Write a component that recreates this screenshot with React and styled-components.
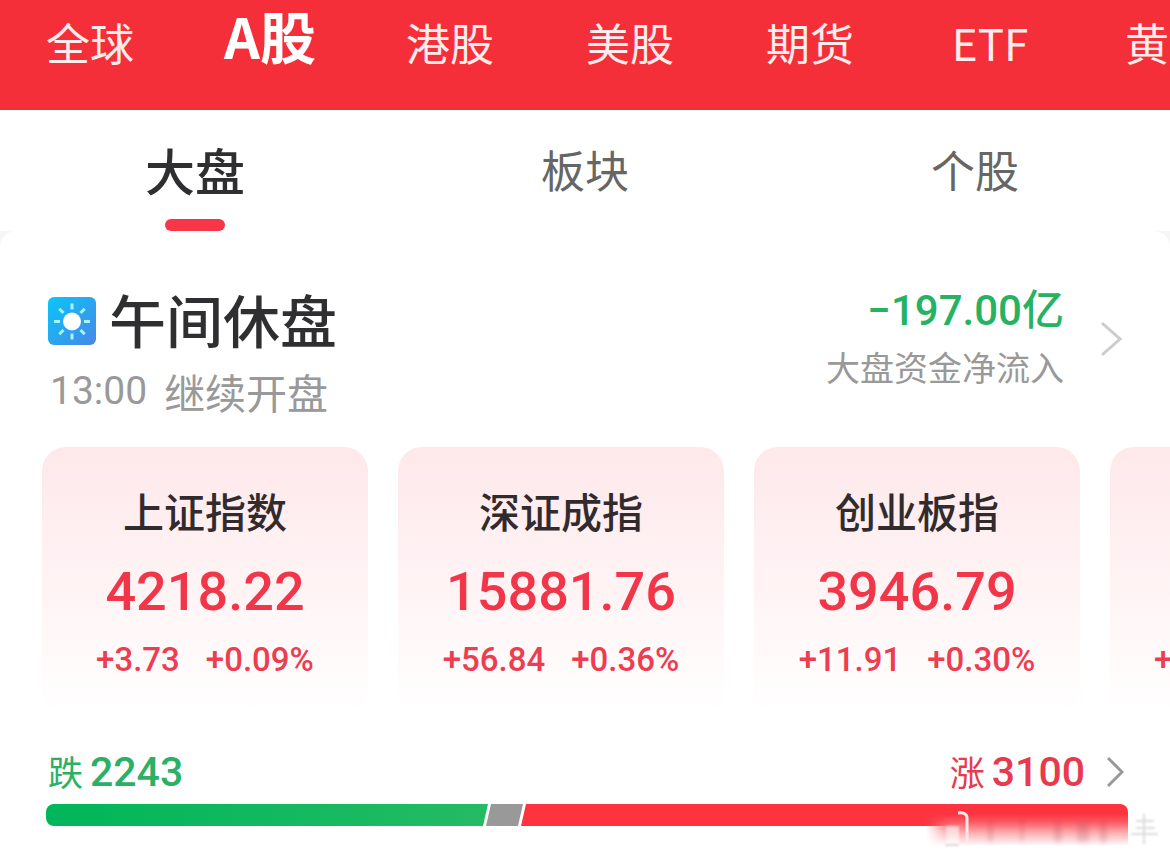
import React, { useState } from "react";
import styled, { createGlobalStyle } from "styled-components";

const GlobalStyle = createGlobalStyle`
  * {
    box-sizing: border-box;
  }

  body {
    margin: 0;
    background: #ffffff;
    color: #2f2f31;
    font-family: "Noto Sans CJK SC", sans-serif;
    overflow-x: hidden;
  }

  button {
    border: 0;
    padding: 0;
    background: none;
    font-family: inherit;
    cursor: pointer;
  }
`;

const Page = styled.div`
  min-height: 100vh;
  overflow: hidden;
`;

// Red market bar at the top
const MarketBar = styled.nav`
  display: flex;
  align-items: flex-start;
  background: #f52f39;
`;

const MarketTab = styled.button`
  flex: 0 0 180px;
  padding: ${(props) => (props.$active ? "5px 0 45px" : "12px 0 38px")};
  color: ${(props) => (props.$active ? "#ffffff" : "#ffeceb")};
  font-size: ${(props) => (props.$active ? "56px" : "44px")};
  font-weight: ${(props) => (props.$active ? 700 : 400)};
  line-height: 60px;
  white-space: nowrap;
`;

// Last tab, cut off by the edge of the screen
const EdgeTab = styled(MarketTab)`
  flex: 0 0 auto;
  padding-left: 45px;
`;

const SubTabs = styled.div`
  display: grid;
  grid-template-columns: repeat(3, 1fr);
  background: #ffffff;
`;

const SubTab = styled.button`
  display: flex;
  flex-direction: column;
  align-items: center;
  gap: 20px;
  padding-top: 29px;
  color: ${(props) => (props.$active ? "#2f2f31" : "#666666")};
  font-size: ${(props) => (props.$active ? "50px" : "44px")};
  font-weight: ${(props) => (props.$active ? 500 : 400)};
  line-height: 60px;

  &::after {
    content: "";
    width: 60px;
    height: 12px;
    border-radius: 6px;
    background: ${(props) => (props.$active ? "#f93648" : "transparent")};
  }
`;

// Grey shows behind the rounded top corners of the panel
const PanelBack = styled.div`
  background: #f6f6f6;
`;

const Panel = styled.main`
  padding: 60px 42px 32px;
  border-radius: 16px 16px 0 0;
  background: #ffffff;
`;

const StatusRow = styled.section`
  display: flex;
  justify-content: space-between;
  align-items: flex-start;
  padding: 0 6px;
`;

const StatusTitle = styled.h1`
  display: flex;
  align-items: flex-end;
  gap: 13px;
  margin: 0 0 22px;
  font-size: 57px;
  font-weight: 500;
  line-height: 54px;
`;

const StatusNote = styled.p`
  display: flex;
  align-items: center;
  gap: 17px;
  margin: 0;
  color: #999999;
  font-size: 41px;
  line-height: 48px;
`;

const NoteTime = styled.time`
  padding-left: 2px;
  font-family: Roboto, sans-serif;
  font-size: 39px;
`;

const FlowButton = styled.button`
  display: flex;
  align-items: center;
  gap: 36px;
  color: #999999;
  text-align: right;
`;

const FlowText = styled.span`
  display: flex;
  flex-direction: column;
  gap: 16px;
  font-size: 34px;
  line-height: 40px;
`;

const FlowValue = styled.span`
  color: #25b262;
  font-family: Roboto, "Noto Sans CJK SC", sans-serif;
  font-size: 42px;
  font-weight: 500;
  line-height: 40px;
`;

const CardRow = styled.section`
  display: flex;
  gap: 30px;
  margin: 32px -42px 0 0;
`;

const Card = styled.article`
  display: flex;
  flex: 0 0 326px;
  flex-direction: column;
  align-items: ${(props) => (props.$cut ? "flex-start" : "center")};
  justify-content: flex-end;
  padding: 39px ${(props) => (props.$cut ? "44px" : "0")} 35px;
  border-radius: 24px;
  background: linear-gradient(#fee8ea, #fff3f4 50%, #ffffff);
`;

const CardName = styled.h2`
  margin: 0 0 26px;
  color: #322b2d;
  font-size: 41px;
  font-weight: 500;
  line-height: 48px;
`;

const CardValue = styled.strong`
  margin-bottom: 16px;
  color: #f2364a;
  font-family: Roboto, sans-serif;
  font-size: 54px;
  font-weight: 500;
  line-height: 64px;
`;

const CardChange = styled.div`
  display: flex;
  gap: 26px;
  color: #ee3c50;
  font-family: Roboto, sans-serif;
  font-size: 33px;
  font-weight: 500;
  line-height: 40px;
`;

const BreadthRow = styled.section`
  display: flex;
  justify-content: space-between;
  margin-top: 32px;
  padding: 0 4px 0 6px;
`;

const Breadth = styled.button`
  display: flex;
  align-items: baseline;
  gap: 7px;
  color: ${(props) => props.$color};
  font-size: 35px;
  line-height: 48px;

  svg {
    align-self: center;
    margin-left: 14px;
  }
`;

const BreadthCount = styled.span`
  font-family: Roboto, sans-serif;
  font-size: 41px;
  font-weight: 500;
`;

const BarWrap = styled.div`
  position: relative;
  margin-top: 8px;
  padding-left: 4px;
`;

const Bar = styled.div`
  display: flex;
  height: 22px;
  border-radius: 8px;
  overflow: hidden;
`;

const Segment = styled.div`
  margin-left: ${(props) => (props.$first ? "0" : "-2px")};
  background: ${(props) => props.$fill};
  clip-path: polygon(
    ${(props) => (props.$first ? "0" : "5px")} 0,
    100% 0,
    ${(props) => (props.$last ? "100%" : "calc(100% - 5px)")} 100%,
    0 100%
  );
`;

// Washed-out patch over the right end of the bar
const Smudge = styled.svg`
  position: absolute;
  top: 6px;
  right: -34px;
`;

const MARKETS = ["全球", "A股", "港股", "美股", "期货", "ETF"];
const SECTIONS = ["大盘", "板块", "个股"];

const INDICES = [
  { name: "上证指数", value: "4218.22", change: "+3.73", percent: "+0.09%" },
  { name: "深证成指", value: "15881.76", change: "+56.84", percent: "+0.36%" },
  { name: "创业板指", value: "3946.79", change: "+11.91", percent: "+0.30%" },
];

const BREADTH = [
  { key: "down", share: 442, fill: "linear-gradient(90deg, #00b65a, #24bb63)" },
  { key: "flat", share: 37, fill: "#999999" },
  { key: "up", share: 607, fill: "#fd3440" },
];

const SunIcon = () => (
  <svg width="48" height="48" viewBox="0 0 48 48" aria-hidden="true">
    <defs>
      <linearGradient id="sky" x1="0" y1="0" x2="1" y2="1">
        <stop offset="0" stopColor="#08c6fa" />
        <stop offset="1" stopColor="#4a86e6" />
      </linearGradient>
    </defs>
    <rect width="48" height="48" rx="6" fill="url(#sky)" />
    <circle cx="24" cy="24.5" r="9" fill="#ffffff" />
    {[0, 45, 90, 135, 180, 225, 270, 315].map((angle) => (
      <rect
        key={angle}
        x="22.5"
        y="6.5"
        width="3"
        height="6"
        fill="#a5f3fd"
        transform={`rotate(${angle} 24 24.5)`}
      />
    ))}
  </svg>
);

const Chevron = ({ width, height, color }) => (
  <svg width={width} height={height} viewBox={`0 0 ${width} ${height}`} aria-hidden="true">
    <polyline
      points={`2,2 ${width - 2},${height / 2} 2,${height - 2}`}
      fill="none"
      stroke={color}
      strokeWidth="3"
    />
  </svg>
);

const BarSmudge = () => (
  <Smudge width="236" height="44" viewBox="0 0 236 44" aria-hidden="true">
    <defs>
      <linearGradient id="fade" x1="0" y1="0" x2="0" y2="1">
        <stop offset="0" stopColor="#fd3440" />
        <stop offset="0.25" stopColor="#fc5a62" />
        <stop offset="0.6" stopColor="#feb0b3" />
        <stop offset="1" stopColor="#ffffff" />
      </linearGradient>
      <linearGradient id="edge" x1="0" y1="0" x2="1" y2="0">
        <stop offset="0" stopColor="#000000" />
        <stop offset="0.1" stopColor="#ffffff" />
      </linearGradient>
      <mask id="edgeMask">
        <rect width="236" height="44" fill="url(#edge)" />
      </mask>
      <filter id="soft" x="-20%" y="-20%" width="140%" height="140%">
        <feGaussianBlur stdDeviation="2 3" />
      </filter>
      <filter id="faint">
        <feGaussianBlur stdDeviation="1" />
      </filter>
    </defs>
    <rect y="4" width="202" height="32" fill="url(#fade)" mask="url(#edgeMask)" />
    <g filter="url(#soft)" fill="#a04048" opacity="0.2">
      <rect x="62" y="12" width="5" height="20" />
      <rect x="94" y="9" width="4" height="22" />
      <rect x="128" y="12" width="8" height="20" />
      <rect x="151" y="12" width="12" height="20" />
      <rect x="174" y="12" width="7" height="20" />
    </g>
    <g filter="url(#faint)">
      <rect x="20" y="16" width="13" height="18" fill="#ffffff" opacity="0.6" />
      <path d="M19 35H33" stroke="#cccccc" strokeWidth="1.5" />
      <path d="M218 4V34M210 11H228M210 18H229M205 24H232" stroke="#dddddd" strokeWidth="2" />
    </g>
    <path d="M32 3Q41 2 41 8V32" fill="none" stroke="#ffe9e9" strokeWidth="3" />
  </Smudge>
);

const App = () => {
  const [market, setMarket] = useState("A股");
  const [section, setSection] = useState("大盘");

  return (
    <Page>
      <GlobalStyle />
      <MarketBar>
        {MARKETS.map((name) => (
          <MarketTab key={name} $active={name === market} onClick={() => setMarket(name)}>
            {name}
          </MarketTab>
        ))}
        <EdgeTab>黄</EdgeTab>
      </MarketBar>

      <SubTabs>
        {SECTIONS.map((name) => (
          <SubTab key={name} $active={name === section} onClick={() => setSection(name)}>
            {name}
          </SubTab>
        ))}
      </SubTabs>

      <PanelBack>
        <Panel>
          <StatusRow>
            <div>
              <StatusTitle>
                <SunIcon />
                午间休盘
              </StatusTitle>
              <StatusNote>
                <NoteTime>13:00</NoteTime>
                <span>继续开盘</span>
              </StatusNote>
            </div>
            <FlowButton>
              <FlowText>
                <FlowValue>−197.00亿</FlowValue>
                <span>大盘资金净流入</span>
              </FlowText>
              <Chevron width={22} height={36} color="#cccccc" />
            </FlowButton>
          </StatusRow>

          <CardRow>
            {INDICES.map((item) => (
              <Card key={item.name}>
                <CardName>{item.name}</CardName>
                <CardValue>{item.value}</CardValue>
                <CardChange>
                  <span>{item.change}</span>
                  <span>{item.percent}</span>
                </CardChange>
              </Card>
            ))}
            <Card $cut>
              <CardChange>+</CardChange>
            </Card>
          </CardRow>

          <BreadthRow>
            <Breadth $color="#2bb066">
              跌<BreadthCount>2243</BreadthCount>
            </Breadth>
            <Breadth $color="#e83a4e">
              涨<BreadthCount>3100</BreadthCount>
              <Chevron width={18} height={32} color="#999999" />
            </Breadth>
          </BreadthRow>

          <BarWrap>
            <Bar>
              {BREADTH.map((part, index) => (
                <Segment
                  key={part.key}
                  $first={index === 0}
                  $last={index === BREADTH.length - 1}
                  $fill={part.fill}
                  style={{ flex: `${part.share} 1 0` }}
                />
              ))}
            </Bar>
            <BarSmudge />
          </BarWrap>
        </Panel>
      </PanelBack>
    </Page>
  );
};

export default App;
